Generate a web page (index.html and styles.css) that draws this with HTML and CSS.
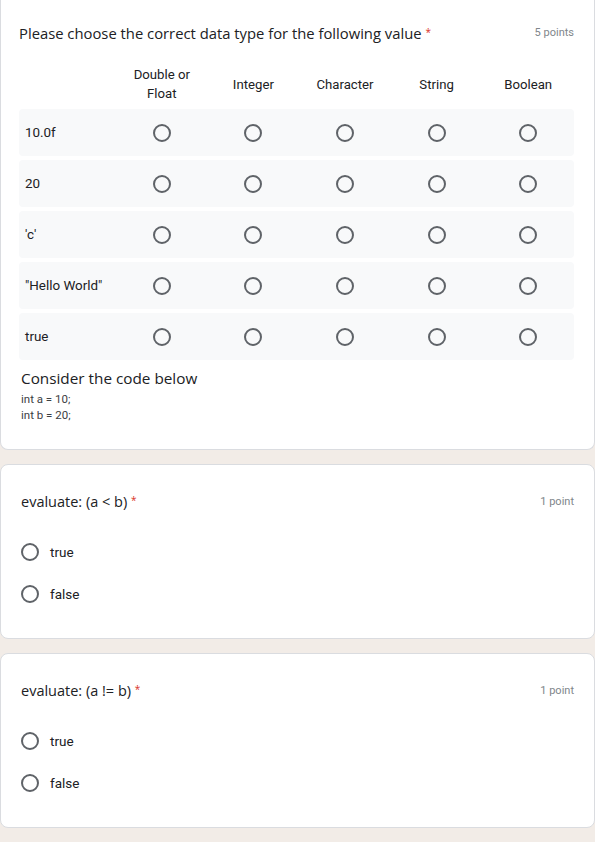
FILE: index.html
```html
<!DOCTYPE html>
<html lang="en">
<head>
<meta charset="utf-8">
<title>Quiz</title>
<link rel="stylesheet" href="styles.css">
</head>
<body>
<div class="card card-grid">
  <div class="qhead">
    <div class="qtitle">Please choose the correct data type for the following value <span class="req">*</span></div>
    <div class="points">5 points</div>
  </div>
  <div class="grid">
    <div class="gh"></div>
    <div class="gh">Double or<br>Float</div>
    <div class="gh">Integer</div>
    <div class="gh">Character</div>
    <div class="gh">String</div>
    <div class="gh">Boolean</div>

    <div class="row">
      <div class="rl">10.0f</div>
      <div class="cell"><span class="radio"></span></div>
      <div class="cell"><span class="radio"></span></div>
      <div class="cell"><span class="radio"></span></div>
      <div class="cell"><span class="radio"></span></div>
      <div class="cell"><span class="radio"></span></div>
    </div>
    <div class="row">
      <div class="rl">20</div>
      <div class="cell"><span class="radio"></span></div>
      <div class="cell"><span class="radio"></span></div>
      <div class="cell"><span class="radio"></span></div>
      <div class="cell"><span class="radio"></span></div>
      <div class="cell"><span class="radio"></span></div>
    </div>
    <div class="row">
      <div class="rl">'c'</div>
      <div class="cell"><span class="radio"></span></div>
      <div class="cell"><span class="radio"></span></div>
      <div class="cell"><span class="radio"></span></div>
      <div class="cell"><span class="radio"></span></div>
      <div class="cell"><span class="radio"></span></div>
    </div>
    <div class="row">
      <div class="rl">"Hello World"</div>
      <div class="cell"><span class="radio"></span></div>
      <div class="cell"><span class="radio"></span></div>
      <div class="cell"><span class="radio"></span></div>
      <div class="cell"><span class="radio"></span></div>
      <div class="cell"><span class="radio"></span></div>
    </div>
    <div class="row">
      <div class="rl">true</div>
      <div class="cell"><span class="radio"></span></div>
      <div class="cell"><span class="radio"></span></div>
      <div class="cell"><span class="radio"></span></div>
      <div class="cell"><span class="radio"></span></div>
      <div class="cell"><span class="radio"></span></div>
    </div>
  </div>
  <div class="section-title">Consider the code below</div>
  <div class="code">int a = 10;<br>int b = 20;</div>
</div>

<div class="card card-q">
  <div class="qhead">
    <div class="qtitle2">evaluate: (a &lt; b) <span class="req">*</span></div>
    <div class="points">1 point</div>
  </div>
  <div class="options">
    <div class="opt"><span class="radio"></span><span class="opt-text">true</span></div>
    <div class="opt"><span class="radio"></span><span class="opt-text">false</span></div>
  </div>
</div>

<div class="card card-q">
  <div class="qhead">
    <div class="qtitle2">evaluate: (a != b) <span class="req">*</span></div>
    <div class="points">1 point</div>
  </div>
  <div class="options">
    <div class="opt"><span class="radio"></span><span class="opt-text">true</span></div>
    <div class="opt"><span class="radio"></span><span class="opt-text">false</span></div>
  </div>
</div>
</body>
</html>
```

FILE: styles.css
```css
* { box-sizing: border-box; }

body {
  margin: 0;
  background: #f2ece7;
  font-family: Roboto, "Liberation Sans", sans-serif;
  color: #202124;
  height: 842px;
  overflow: hidden;
}

.card {
  background: #ffffff;
  border: 1px solid #dadce0;
  border-radius: 8px;
}

.card-grid {
  border-top: none;
  border-radius: 0 0 8px 8px;
  padding: 23px 20px 26px 18px;
}

.card-q {
  margin-top: 14px;
  padding: 26px 20px 23px 20px;
}

.qhead {
  display: flex;
  justify-content: space-between;
  align-items: center;
}

.qtitle {
  font-family: "Open Sans", Roboto, sans-serif;
  font-size: 14.8px;
  line-height: 20px;
  height: 20px;
  color: #202124;
}

.qtitle2 {
  font-family: "Open Sans", Roboto, sans-serif;
  font-size: 14.5px;
  line-height: 22px;
  height: 22px;
  color: #202124;
}

.req {
  color: #d93025;
  font-size: 10px;
  line-height: 0;
  vertical-align: 3px;
}

.points {
  font-size: 11px;
  line-height: 14px;
  color: #80868b;
}

.grid {
  display: grid;
  grid-template-columns: 97px repeat(5, 1fr);
  row-gap: 4px;
  margin-top: 20px;
}

.gh {
  height: 42px;
  display: flex;
  align-items: center;
  justify-content: center;
  text-align: center;
  font-size: 13.2px;
  line-height: 19px;
  color: #202124;
}

.row {
  display: contents;
}

.rl, .cell {
  background: #f8f9fa;
  height: 47px;
  display: flex;
  align-items: center;
}

.rl {
  padding-left: 6px;
  font-size: 13.4px;
  border-radius: 4px 0 0 4px;
  color: #202124;
}

.cell {
  justify-content: center;
}

.cell:last-child {
  border-radius: 0 4px 4px 0;
}

.radio {
  display: inline-block;
  width: 18px;
  height: 18px;
  border: 2px solid #5f6368;
  border-radius: 50%;
  flex: none;
}

.section-title {
  font-family: "Open Sans", Roboto, sans-serif;
  font-size: 15.3px;
  line-height: 20px;
  margin-top: 8px;
  padding-left: 2px;
}

.code {
  font-size: 11.5px;
  line-height: 16px;
  margin-top: 3px;
  padding-left: 2px;
  color: #3c4043;
}

.options {
  margin-top: 18px;
}

.opt {
  height: 42px;
  display: flex;
  align-items: center;
  gap: 11px;
}

.opt-text {
  font-size: 13.5px;
  color: #202124;
}
```
